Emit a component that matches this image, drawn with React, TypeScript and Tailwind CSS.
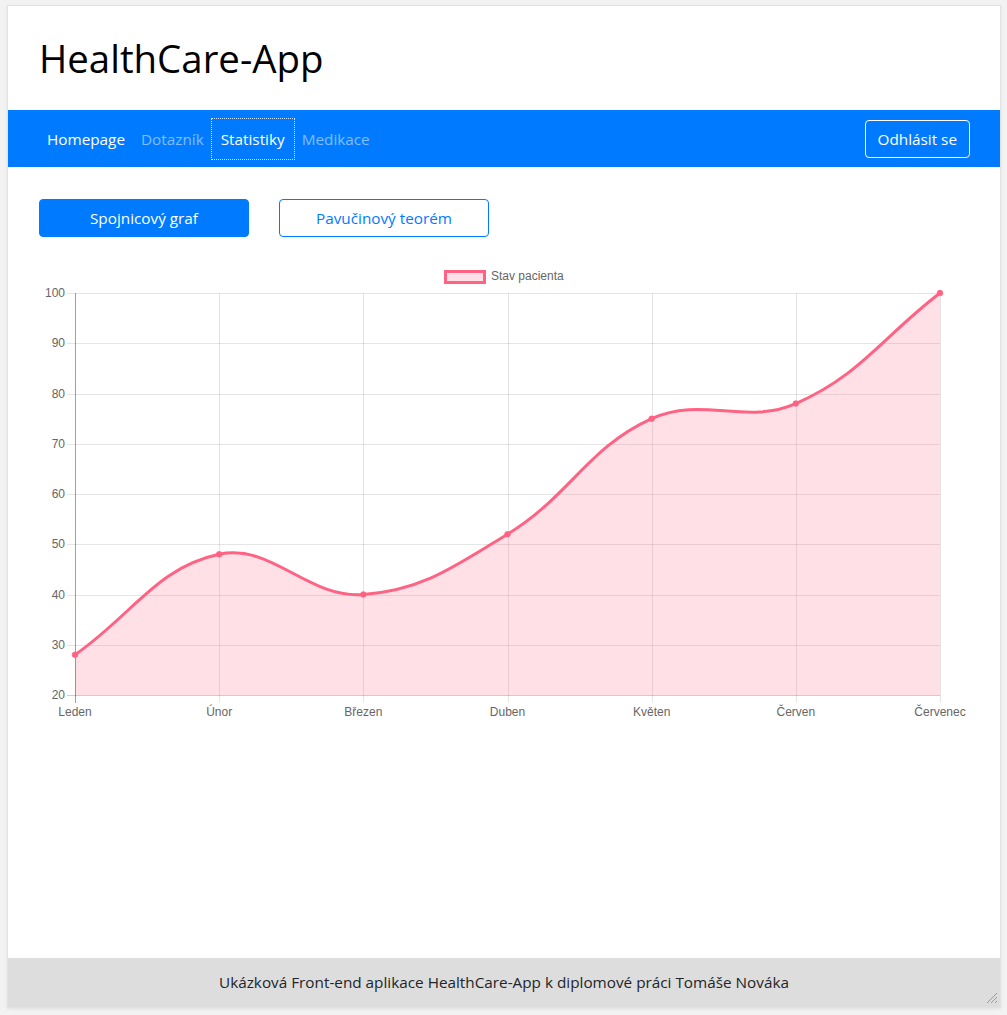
import React from "react";

const W = 930;
const H = 460;
const L = 36;
const R = 901;
const T = 31;
const B = 433;
const labels = ["Leden", "Únor", "Březen", "Duben", "Květen", "Červen", "Červenec"];
const data = [28, 48, 40, 52, 75, 78, 100];

function yOf(v: number) {
  return B - ((v - 20) / 80) * (B - T);
}
function xOf(i: number) {
  return L + (i * (R - L)) / 6;
}

function buildPath() {
  const pts = data.map((v, i) => ({ x: xOf(i), y: yOf(v) }));
  const t = 0.4;
  const cps = pts.map((cur, i) => {
    const prev = i === 0 ? cur : pts[i - 1];
    const next = i === pts.length - 1 ? cur : pts[i + 1];
    const d01 = Math.hypot(cur.x - prev.x, cur.y - prev.y);
    const d12 = Math.hypot(next.x - cur.x, next.y - cur.y);
    let s01 = d01 / (d01 + d12);
    let s12 = d12 / (d01 + d12);
    if (isNaN(s01)) s01 = 0;
    if (isNaN(s12)) s12 = 0;
    const fa = t * s01;
    const fb = t * s12;
    const clampY = (y: number) => Math.max(T, Math.min(B, y));
    const clampX = (x: number) => Math.max(L, Math.min(R, x));
    return {
      px: clampX(cur.x - fa * (next.x - prev.x)),
      py: clampY(cur.y - fa * (next.y - prev.y)),
      nx: clampX(cur.x + fb * (next.x - prev.x)),
      ny: clampY(cur.y + fb * (next.y - prev.y)),
    };
  });
  let d = `M ${pts[0].x} ${pts[0].y}`;
  for (let i = 1; i < pts.length; i++) {
    d += ` C ${cps[i - 1].nx} ${cps[i - 1].ny} ${cps[i].px} ${cps[i].py} ${pts[i].x} ${pts[i].y}`;
  }
  const fill = d + ` L ${pts[pts.length - 1].x} ${B} L ${pts[0].x} ${B} Z`;
  return { d, fill, pts };
}

function Chart() {
  const { d, fill, pts } = buildPath();
  const ticks = [100, 90, 80, 70, 60, 50, 40, 30, 20];
  return (
    <svg width={W} height={H} className="block" style={{ fontFamily: "'Liberation Sans', Arial, sans-serif" }}>
      <rect x={406.5} y={9.5} width={39} height={11} fill="rgba(255,99,132,0.2)" stroke="#ff6384" strokeWidth={3} />
      <text x={452} y={18} fontSize={12} fill="#666">Stav pacienta</text>
      {ticks.map((v) => (
        <g key={v}>
          <line x1={L - 8} x2={R} y1={Math.round(yOf(v)) + 0.5} y2={Math.round(yOf(v)) + 0.5} stroke="rgba(0,0,0,0.1)" />
          <text x={L - 10} y={Math.round(yOf(v)) + 4} fontSize={12} fill="#666" textAnchor="end">{v}</text>
        </g>
      ))}
      {labels.map((lb, i) => (
        <g key={lb}>
          <line x1={Math.round(xOf(i)) + 0.5} x2={Math.round(xOf(i)) + 0.5} y1={T} y2={B + 8} stroke="rgba(0,0,0,0.1)" />
          <text x={xOf(i)} y={B + 21} fontSize={12} fill="#666" textAnchor="middle">{lb}</text>
        </g>
      ))}
      <path d={fill} fill="rgba(255,99,132,0.2)" />
      <line x1={L + 0.5} x2={L + 0.5} y1={T} y2={B + 8} stroke="rgba(0,0,0,0.3)" />
      <line x1={L - 8} x2={R} y1={B + 0.5} y2={B + 0.5} stroke="rgba(0,0,0,0.1)" />
      <path d={d} fill="none" stroke="#ff6384" strokeWidth={3} />
      {pts.map((p, i) => (
        <circle key={i} cx={p.x} cy={p.y} r={3} fill="#ff6384" stroke="rgba(255,99,132,0.3)" strokeWidth={1} />
      ))}
    </svg>
  );
}

export default function App() {
  const font = { fontFamily: "'Segoe UI', 'Open Sans', 'Noto Sans', sans-serif" };
  return (
    <div className="min-h-[1015px] bg-[#f2f2f2] pt-[5px] pl-[7px]" style={font}>
      <div className="relative flex h-[1003px] w-[994px] flex-col border border-[#e2e2e2] bg-white shadow-[0_1px_3px_rgba(0,0,0,0.08)]">
        <header className="flex h-[104px] items-center px-[31px]">
          <h1 className="text-[38.4px] font-normal leading-[1.2] text-black">HealthCare-App</h1>
        </header>
        <nav className="flex h-[57px] items-center justify-between bg-[#007bff] pl-[31px] pr-[30px]">
          <div className="flex items-center pt-px text-[15.3px] leading-6">
            <span className="px-2 py-2 text-white">Homepage</span>
            <span className="px-2 py-2 text-white/50">Dotazník</span>
            <span className="px-[9px] py-[8px] text-white outline-1 outline-dotted outline-white/80">Statistiky</span>
            <span className="px-2 py-2 text-white/50">Medikace</span>
          </div>
          <button className="h-[38px] rounded-[4px] border border-white px-3 text-[15.3px] leading-6 text-white">Odhlásit se</button>
        </nav>
        <main className="flex-1 px-[30px] pt-[32px]">
          <div className="flex gap-[30px] px-px">
            <button className="h-[38px] w-[210px] rounded-[4px] border border-[#007bff] bg-[#007bff] text-[15.3px] text-white">Spojnicový graf</button>
            <button className="h-[38px] w-[210px] rounded-[4px] border border-[#007bff] bg-white text-[15.3px] text-[#007bff]">Pavučinový teorém</button>
          </div>
          <div className="mt-[25px] pl-px">
            <Chart />
          </div>
        </main>
        <footer className="flex h-[49px] items-center justify-center bg-[#dddddd] text-[15.3px] text-[#212529]">
          Ukázková Front-end aplikace HealthCare-App k diplomové práci Tomáše Nováka
        </footer>
        <svg className="absolute bottom-[3px] right-[2px]" width="12" height="12" viewBox="0 0 12 12">
          <line x1="11" y1="1" x2="1" y2="11" stroke="#999" strokeWidth="1" />
          <line x1="11" y1="5" x2="5" y2="11" stroke="#999" strokeWidth="1" />
          <line x1="11" y1="9" x2="9" y2="11" stroke="#999" strokeWidth="1" />
        </svg>
      </div>
    </div>
  );
}
